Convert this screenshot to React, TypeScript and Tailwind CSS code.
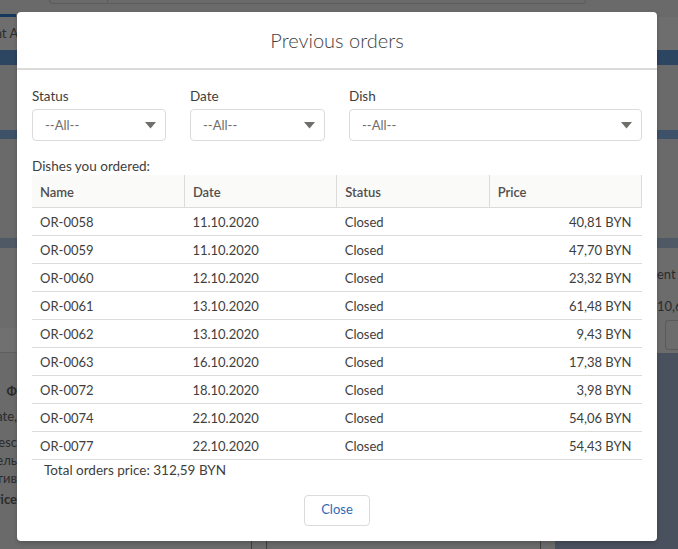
import clsx from "clsx";

const orders = [
  ["OR-0058", "11.10.2020", "Closed", "40,81 BYN"],
  ["OR-0059", "11.10.2020", "Closed", "47,70 BYN"],
  ["OR-0060", "12.10.2020", "Closed", "23,32 BYN"],
  ["OR-0061", "13.10.2020", "Closed", "61,48 BYN"],
  ["OR-0062", "13.10.2020", "Closed", "9,43 BYN"],
  ["OR-0063", "16.10.2020", "Closed", "17,38 BYN"],
  ["OR-0072", "18.10.2020", "Closed", "3,98 BYN"],
  ["OR-0074", "22.10.2020", "Closed", "54,06 BYN"],
  ["OR-0077", "22.10.2020", "Closed", "54,43 BYN"],
];

const Select = ({ label }: { label: string }) => (
  <div>
    <div className="mb-1 h-[18px] text-[13.5px] leading-[18px] text-[#3e3e3c]">{label}</div>
    <div className="flex h-8 items-center justify-between rounded border border-[#dddbda] pl-3 pr-[9px]">
      <span className="pt-px text-[13px] text-[#706e6b]">--All--</span>
      <svg width="11" height="7" viewBox="0 0 11 7">
        <path d="M0 0h11L5.5 6.5z" fill="#706e6b" />
      </svg>
    </div>
  </div>
);

// the dimmed page behind the modal
const Backdrop = () => (
  <div className="flex h-full flex-col text-[13px] text-[#2b2b2b]">
    <div className="h-[14px]">
      <div className="ml-[49px] flex h-[4px] w-[537px] rounded-b border border-t-0 border-[#5c5c5c]">
        <div className="w-[58px] border-r border-[#5c5c5c]" />
      </div>
    </div>
    <div className="flex h-[3px]">
      <div className="w-4 bg-[#16385c]" />
    </div>
    <div className="flex h-[33px] items-center overflow-hidden bg-[#6e6e6e]">
      <div className="ml-[-55px] whitespace-nowrap">Restaurant App</div>
    </div>
    <div className="h-[15px] bg-[#2c4561]" />
    <div className="h-[65px] bg-[#6a6a6a]" />
    <div className="h-[9px] bg-[#3d5168]" />
    <div className="h-[99px] bg-[#6a6a6a]" />
    <div className="h-[10px] bg-[#4f5966]" />
    <div className="flex h-[80px] bg-[#6c6c6c]">
      <div className="flex-1" />
      <div className="flex w-[21px] flex-col gap-[12px] whitespace-nowrap pt-[17px]">
        <div>ent</div>
        <div>10,6</div>
      </div>
    </div>
    <div className="flex h-[25px] bg-[#6c6c6c]">
      <div className="w-[17px] border-b border-[#5f5f5f] bg-[#707070]" />
      <div className="flex-1" />
      <div className="mt-[-8px] h-[30px] w-[13px] rounded-l border border-r-0 border-[#5a5a5a]" />
    </div>
    <div className="flex flex-1">
      <div className="flex w-[17px] flex-col whitespace-nowrap pt-[29px] leading-[18px] [&>div]:flex [&>div]:justify-end">
        <div className="font-bold">Ф</div>
        <div className="mt-[7px]">Rate,</div>
        <div className="mt-[8px]">Desc</div>
        <div>тель</div>
        <div>тив</div>
        <div className="mt-[3px] font-bold">Price</div>
      </div>
      <div className="w-[234px]" />
      <div className="w-[16px] border-x border-[#3f3f3f]" />
      <div className="w-[274px] border-r border-[#3f3f3f]" />
      <div className="w-[14px]" />
      <div className="flex-1 bg-[#4a515e]" />
    </div>
  </div>
);

export default function App() {
  return (
    <div className="relative h-[549px] w-[678px] overflow-hidden bg-[#6a6a6a] font-['Lato',sans-serif]">
      <Backdrop />
      <div className="absolute left-[17px] top-[12px] w-[640px] rounded bg-white shadow-[0_2px_4px_rgba(0,0,0,0.2)]">
        <div className="flex h-[58px] items-center justify-center border-b-2 border-[#dddbda]">
          <h2 className="text-[20px] font-light text-[#3e3e3c]">Previous orders</h2>
        </div>
        <div className="px-[15px] pb-[15px] pt-[17px]">
          <div className="grid grid-cols-[134px_135px_1fr] gap-x-6">
            <Select label="Status" />
            <Select label="Date" />
            <Select label="Dish" />
          </div>
          <div className="mt-4 h-[18px] text-[13.5px] leading-[18px] text-[#3e3e3c]">Dishes you ordered:</div>
          <table className="w-full table-fixed border-collapse text-[13px]">
            <thead>
              <tr className="h-8 bg-[#fafaf9]">
                {["Name", "Date", "Status", "Price"].map((h) => (
                  <th
                    key={h}
                    className="border-b border-r border-[#dddbda] px-2 pt-1 text-left font-semibold text-[#514f4d]"
                  >
                    {h}
                  </th>
                ))}
              </tr>
            </thead>
            <tbody>
              {orders.map((o) => (
                <tr key={o[0]} className="h-7 border-b border-[#dddbda] text-[#3e3e3c]">
                  <td className="px-2 pt-1">{o[0]}</td>
                  <td className="px-2 pt-1">{o[1]}</td>
                  <td className="px-2 pt-1">{o[2]}</td>
                  <td className={clsx("pr-[10px] pt-1 text-right")}>{o[3]}</td>
                </tr>
              ))}
            </tbody>
          </table>
          <div className="mt-px h-[18px] pl-3 text-[13.5px] leading-[18px] text-[#3e3e3c]">
            Total orders price: 312,59 BYN
          </div>
          <div className="mt-4 flex justify-center">
            <button className="h-[31px] rounded border border-[#dddbda] px-4 text-[13px] text-[#2f69b3]">
              Close
            </button>
          </div>
        </div>
      </div>
    </div>
  );
}
